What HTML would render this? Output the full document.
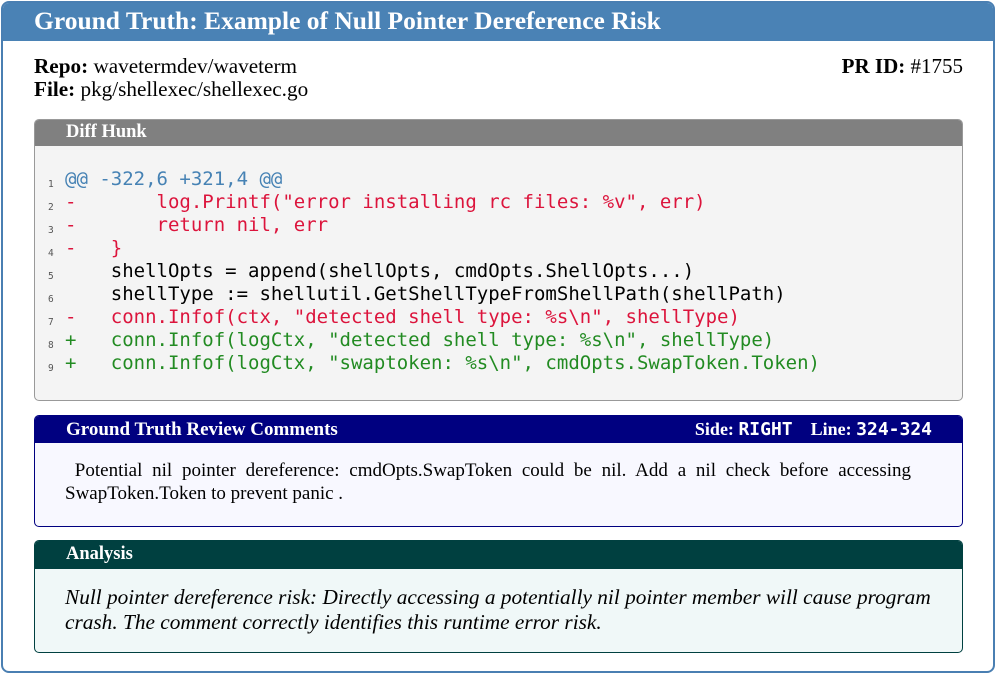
<!DOCTYPE html>
<html><head><meta charset="utf-8"><style>
*{margin:0;padding:0;box-sizing:border-box}
body{width:996px;height:674px;background:#fff;position:relative;font-family:"Liberation Serif",serif;color:#000;overflow:hidden}
.a{position:absolute}
.outer{left:1px;top:1px;width:994px;height:672px;border:2px solid #4a7fb2;border-radius:8px;overflow:hidden}
.ttl{left:0;top:0;width:100%;height:38px;background:#4a82b5;color:#fff;font-weight:bold;font-size:25.5px;padding-left:31px;line-height:35px}
.box{border-radius:5px;overflow:hidden}
.hd{color:#fff;font-weight:bold;font-size:18.5px;padding-left:31px}
.mono{font-family:"DejaVu Sans Mono",monospace;font-size:19px;white-space:pre}
.ln{font-family:"DejaVu Sans Mono",monospace;font-size:9.5px;color:#555;left:48px}
.r{color:#dc143c}.g{color:#228b22}.b{color:#4682b4}
</style></head><body>
<div class="a outer">
<div class="a ttl">Ground Truth: Example of Null Pointer Dereference Risk</div>
</div>
<div class="a" style="left:34px;top:55px;font-size:21.2px;line-height:23px"><b>Repo:</b> wavetermdev/waveterm<br><b>File:</b> pkg/shellexec/shellexec.go</div>
<div class="a" style="right:33px;top:55px;font-size:21px;line-height:23px"><b>PR ID:</b> #1755</div>

<div class="a box" style="left:34px;top:119px;width:929px;height:282px;background:#f4f4f4;border:1px solid #999">
<div class="hd" style="background:#808080;height:26px;line-height:25px">Diff Hunk</div>
</div>
<div class="a ln" style="top:179px">1</div><div class="a mono b" style="left:65px;top:168px">@@ -322,6 +321,4 @@</div>
<div class="a ln" style="top:202px">2</div><div class="a mono r" style="left:65px;top:191px">-       log.Printf("error installing rc files: %v", err)</div>
<div class="a ln" style="top:225px">3</div><div class="a mono r" style="left:65px;top:214px">-       return nil, err</div>
<div class="a ln" style="top:248px">4</div><div class="a mono r" style="left:65px;top:237px">-   }</div>
<div class="a ln" style="top:271px">5</div><div class="a mono" style="left:65px;top:260px">    shellOpts = append(shellOpts, cmdOpts.ShellOpts...)</div>
<div class="a ln" style="top:294px">6</div><div class="a mono" style="left:65px;top:283px">    shellType := shellutil.GetShellTypeFromShellPath(shellPath)</div>
<div class="a ln" style="top:317px">7</div><div class="a mono r" style="left:65px;top:306px">-   conn.Infof(ctx, "detected shell type: %s\n", shellType)</div>
<div class="a ln" style="top:340px">8</div><div class="a mono g" style="left:65px;top:329px">+   conn.Infof(logCtx, "detected shell type: %s\n", shellType)</div>
<div class="a ln" style="top:363px">9</div><div class="a mono g" style="left:65px;top:352px">+   conn.Infof(logCtx, "swaptoken: %s\n", cmdOpts.SwapToken.Token)</div>

<div class="a box" style="left:34px;top:415px;width:929px;height:112px;background:#f8f8ff;border:1px solid #000080">
<div class="hd" style="background:#000080;height:27px;line-height:28px;font-size:19px">Ground Truth Review Comments</div>
</div>
<div class="a" style="right:64px;top:415px;height:27px;line-height:28px;color:#fff;font-weight:bold;font-size:18px">Side: <span style="font-family:'DejaVu Sans Mono',monospace;font-size:18px">RIGHT</span>&nbsp;&nbsp;&nbsp;&nbsp;Line: <span style="font-family:'DejaVu Sans Mono',monospace;font-size:18px">324-324</span></div>
<div class="a" style="left:65px;top:459px;width:846px;font-size:19px;line-height:23px">
<div style="text-align:justify;text-align-last:justify">&nbsp;Potential nil pointer dereference: cmdOpts.SwapToken could be nil. Add a nil check before accessing</div>
<div>SwapToken.Token to prevent panic .</div></div>

<div class="a box" style="left:34px;top:540px;width:929px;height:113px;background:#f0f8f8;border:1px solid #004040">
<div class="hd" style="background:#004040;height:28px;line-height:27px">Analysis</div>
</div>
<div class="a" style="left:65px;top:585px;font-size:21.3px;line-height:25px;font-style:italic">Null pointer dereference risk: Directly accessing a potentially nil pointer member will cause program<br>crash. The comment correctly identifies this runtime error risk.</div>
</body></html>
